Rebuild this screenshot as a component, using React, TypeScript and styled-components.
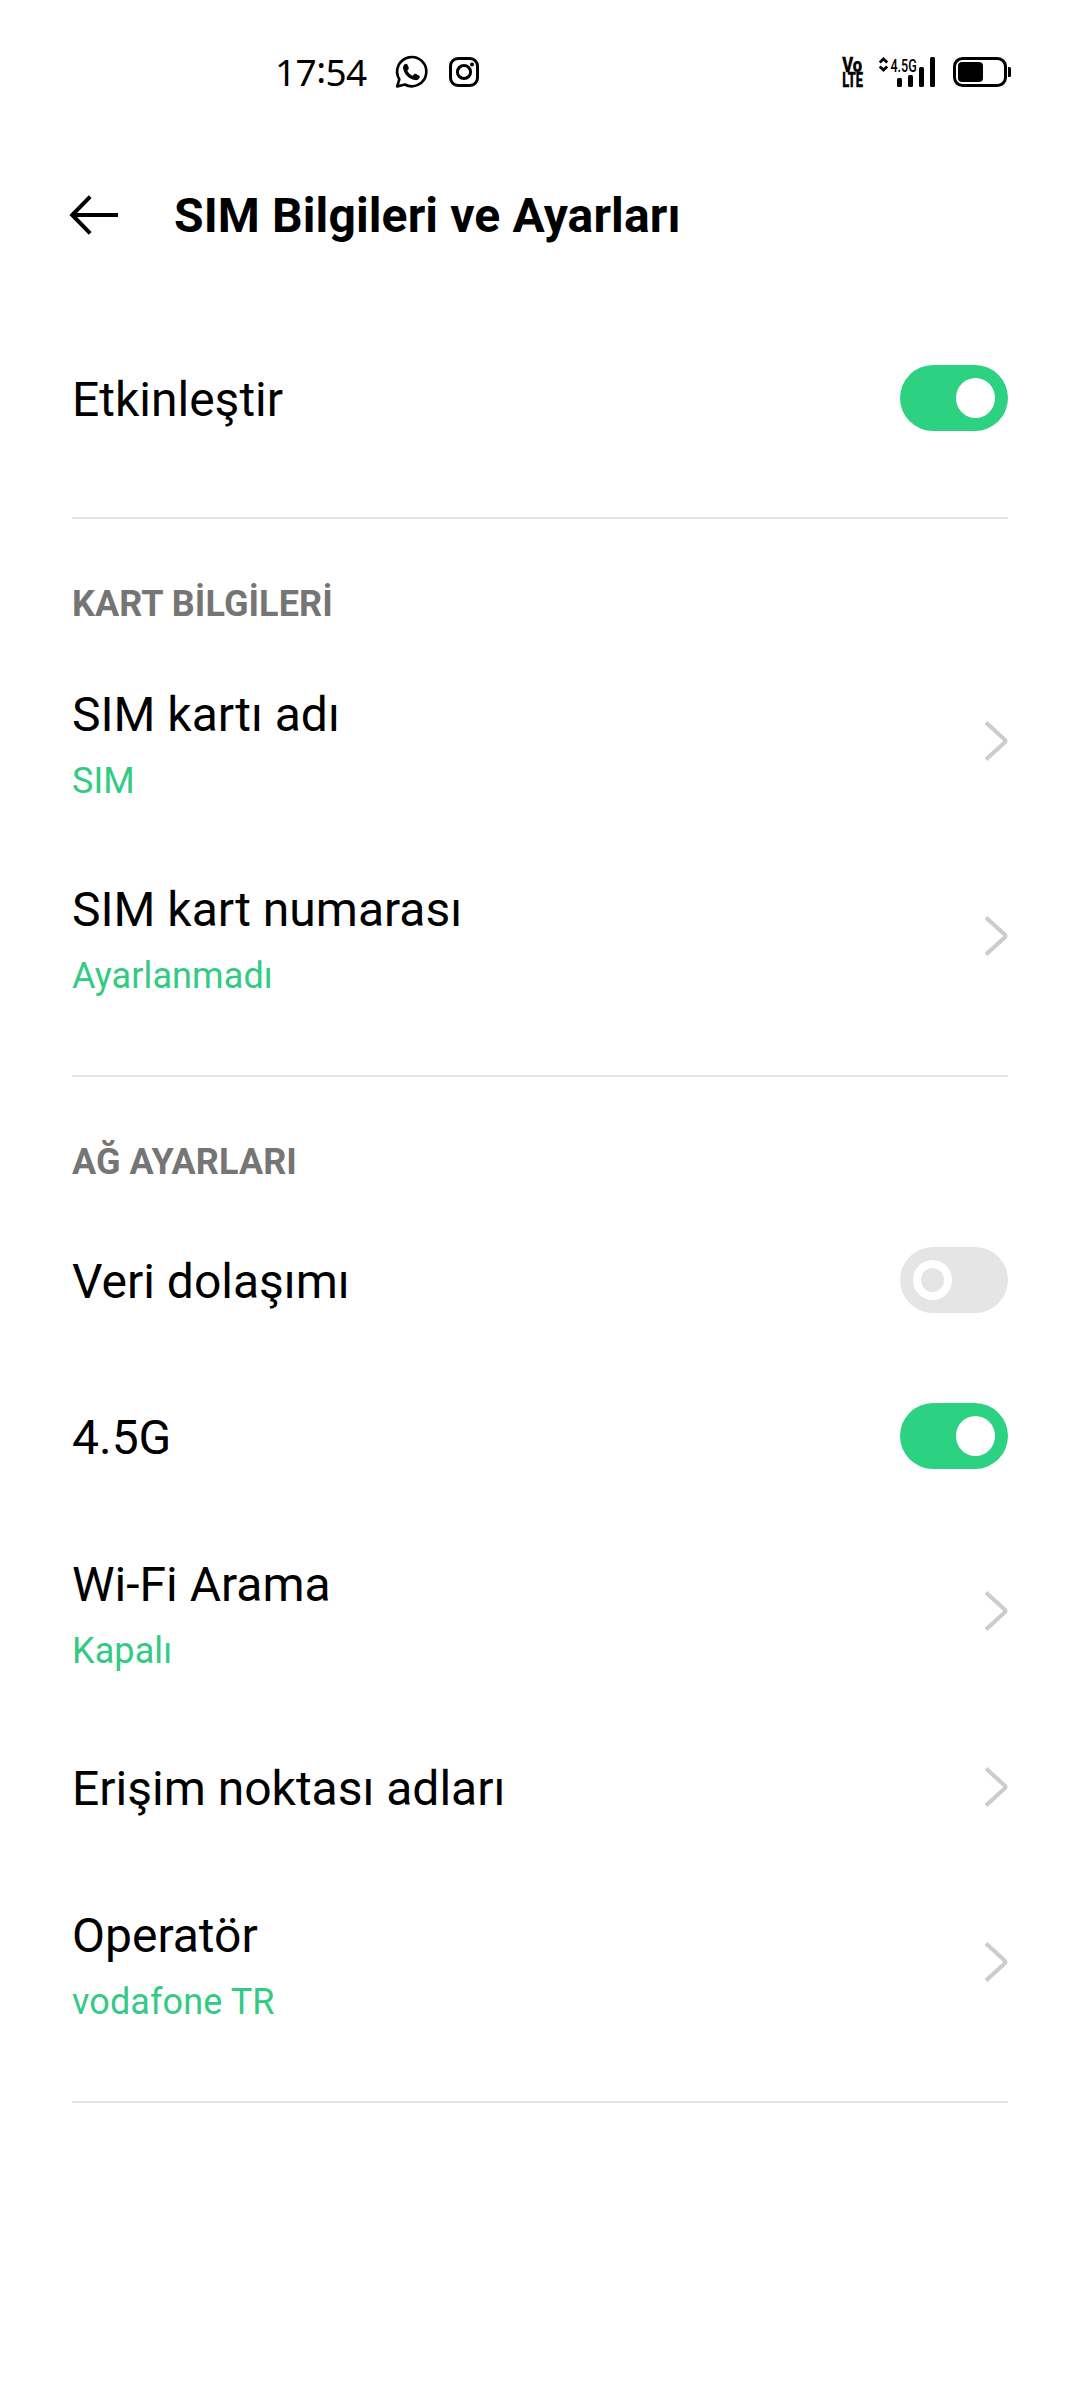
import React from "react";
import styled, { createGlobalStyle } from "styled-components";

const GlobalStyle = createGlobalStyle`
  body {
    margin: 0;
    background: #ffffff;
  }
  * {
    box-sizing: border-box;
  }
`;

const Screen = styled.div`
  width: 1080px;
  height: 2400px;
  display: flex;
  flex-direction: column;
  overflow: hidden;
  background: #ffffff;
  color: #000000;
  font-family: Roboto, "Liberation Sans", sans-serif;
`;

const StatusBar = styled.header`
  height: 144px;
  flex: none;
  display: flex;
  justify-content: space-between;
  align-items: center;
  padding: 0 68px 0 275px;
`;

const StatusGroup = styled.div`
  display: flex;
  align-items: center;
`;

const Clock = styled.time`
  width: 120px;
  font: 400 37px/50px "Noto Sans", "Open Sans", sans-serif;
  letter-spacing: -0.6px;
  white-space: nowrap;
`;

const ClockColon = styled.span`
  display: inline-block;
  transform: translateY(-3px);
`;

const Icon = styled.svg<{ $gap?: number }>`
  display: block;
  flex: none;
  overflow: visible;
  margin-left: ${({ $gap = 0 }) => $gap}px;
`;

const AppBar = styled.div`
  height: 176px;
  flex: none;
  display: flex;
  align-items: flex-start;
  gap: 52px;
  padding: 44px 72px 0 68px;
`;

const BackButton = styled.button`
  width: 54px;
  height: 54px;
  padding: 0;
  border: 0;
  background: none;
`;

const Title = styled.h1`
  margin: 0;
  font-size: 48px;
  line-height: 56px;
  font-weight: 700;
  letter-spacing: 0.12px;
  white-space: nowrap;
`;

const Section = styled.section`
  margin: 0 72px;
  padding-bottom: 41px;
  border-bottom: 2px solid #e5e5e5;
`;

const SectionTitle = styled.h2`
  height: 125px;
  margin: 0;
  padding-top: 64px;
  font-size: 36px;
  line-height: 42px;
  font-weight: 700;
  letter-spacing: 0.08px;
  color: #757575;
`;

const Row = styled.div<{ $tall: boolean }>`
  height: ${({ $tall }) => ($tall ? 195 : 156)}px;
  display: flex;
  align-items: center;
  justify-content: space-between;
`;

const RowText = styled.div<{ $tall: boolean }>`
  display: flex;
  flex-direction: column;
  gap: 17px;
  padding-top: ${({ $tall }) => ($tall ? 6 : 3)}px;
`;

const Label = styled.span`
  font-size: 48px;
  line-height: 56px;
`;

const Value = styled.span`
  font-size: 36px;
  line-height: 42px;
  letter-spacing: 0.1px;
  color: #33ca83;
`;

const Track = styled.button<{ $on: boolean }>`
  width: 108px;
  height: 66px;
  padding: 13px;
  border: 0;
  border-radius: 33px;
  display: flex;
  justify-content: ${({ $on }) => ($on ? "flex-end" : "flex-start")};
  background: ${({ $on }) => ($on ? "#2cd282" : "#e5e5e5")};
`;

const Knob = styled.span<{ $on: boolean }>`
  width: 39px;
  height: 40px;
  border-radius: 50%;
  border: 8px solid #ffffff;
  background: ${({ $on }) => ($on ? "#ffffff" : "transparent")};
`;

const Toggle = ({ on, label }: { on: boolean; label: string }) => (
  <Track $on={on} role="switch" aria-checked={on} aria-label={label}>
    <Knob $on={on} />
  </Track>
);

const Chevron = () => (
  <Icon width="24" height="43" viewBox="0 0 24 43" fill="none">
    <path d="M2 2.4 20.6 19.4Q22.2 21 20.6 22.6L2 39.6" stroke="#cccccc" strokeWidth="4" />
  </Icon>
);

type RowData = { label: string; value?: string; on?: boolean };

const SettingRow = ({ label, value, on }: RowData) => (
  <Row $tall={value !== undefined}>
    <RowText $tall={value !== undefined}>
      <Label>{label}</Label>
      {value && <Value>{value}</Value>}
    </RowText>
    {on === undefined ? <Chevron /> : <Toggle on={on} label={label} />}
  </Row>
);

const sections: { title?: string; rows: RowData[] }[] = [
  { rows: [{ label: "Etkinleştir", on: true }] },
  {
    title: "KART BİLGİLERİ",
    rows: [
      { label: "SIM kartı adı", value: "SIM" },
      { label: "SIM kart numarası", value: "Ayarlanmadı" },
    ],
  },
  {
    title: "AĞ AYARLARI",
    rows: [
      { label: "Veri dolaşımı", on: false },
      { label: "4.5G", on: true },
      { label: "Wi-Fi Arama", value: "Kapalı" },
      { label: "Erişim noktası adları" },
      { label: "Operatör", value: "vodafone TR" },
    ],
  },
];

const WhatsApp = () => (
  <Icon width="34" height="34" viewBox="0 0 34 34">
    <path
      d="M2.2 31.4 4.3 24.3A14.6 14.6 0 1 1 9.8 29.5Z"
      fill="none"
      stroke="#000"
      strokeWidth="2.6"
      strokeLinejoin="round"
    />
    <path
      d="M9.6 9.3c.9-.9 2.300-.8 2.800.3l1.300 3c.3.8.1 1.400-.5 2l-.9 1.100c1.200 2.300 3 4 5.400 5.100l1.500-1.500c.5-.5 1.100-.6 1.800-.3l2.900 1.400c1 .5 1.200 1.200.8 2.200-.8 2-2.700 2.900-4.900 2.500C13.900 24 9.100 19.200 8.100 13.500c-.3-1.700.3-3.100 1.500-4.200Z"
      fill="#000"
    />
  </Icon>
);

const Instagram = () => (
  <Icon $gap={19} width="32" height="32" viewBox="0 0 32 32" fill="none" stroke="#000">
    <rect x="2.500" y="2.500" width="27" height="27" rx="7.500" strokeWidth="3" />
    <circle cx="16" cy="16" r="6.600" strokeWidth="3" />
    <circle cx="24" cy="8.400" r="2" fill="#000" stroke="none" />
  </Icon>
);

const VoLte = () => (
  <Icon
    width="24"
    height="32"
    viewBox="0 0 24 32"
    fontFamily="Roboto, sans-serif"
    fontWeight="800"
    stroke="#000"
    strokeWidth="0.4"
  >
    <text transform="translate(1.300 15.500) scale(.86 1)" fontSize="19.300">Vo</text>
    <text transform="translate(1.200 30.900) scale(.66 1)" fontSize="19.500">LTE</text>
  </Icon>
);

const Signal = () => (
  <Icon $gap={13} width="58" height="32" viewBox="0 0 58 32">
    <path
      d="M1.800 6.600 5.500 3l3.700 3.600M1.800 10.400 5.500 14l3.700-3.600"
      fill="none"
      stroke="#000"
      strokeWidth="2.800"
    />
    <text
      transform="translate(12.500 16.200) scale(.66 1)"
      fontFamily="Roboto, sans-serif"
      fontWeight="500"
      fontSize="19"
    >
      4.5G
    </text>
    <rect x="19" y="22" width="5" height="9" rx="1.500" />
    <rect x="30" y="19" width="5" height="12" rx="1.500" />
    <rect x="41" y="11" width="5" height="20" rx="1.500" />
    <rect x="52" y="1" width="5" height="30" rx="1.500" />
  </Icon>
);

const Battery = () => (
  <Icon $gap={16} width="60" height="32" viewBox="0 0 60 32">
    <rect x="2.500" y="2.500" width="51" height="27" rx="8" fill="none" stroke="#000" strokeWidth="3" />
    <rect x="6" y="6" width="25" height="20" rx="4" />
    <path d="M56 11h1.500Q59 11 59 12.500v7Q59 21 57.500 21H56Z" />
  </Icon>
);

export default function App() {
  return (
    <Screen>
      <GlobalStyle />
      <StatusBar>
        <StatusGroup>
          <Clock>
            17<ClockColon>:</ClockColon>54
          </Clock>
          <WhatsApp />
          <Instagram />
        </StatusGroup>
        <StatusGroup>
          <VoLte />
          <Signal />
          <Battery />
        </StatusGroup>
      </StatusBar>
      <AppBar>
        <BackButton aria-label="Geri">
          <Icon width="54" height="54" viewBox="0 0 54 54" fill="none">
            <path d="M22.200 8.600 4.200 27l18 18.400M4.200 27H50" stroke="#000" strokeWidth="4" />
          </Icon>
        </BackButton>
        <Title>SIM Bilgileri ve Ayarları</Title>
      </AppBar>
      <main>
        {sections.map(({ title, rows }, i) => (
          <Section key={i}>
            {title && <SectionTitle>{title}</SectionTitle>}
            {rows.map((row) => (
              <SettingRow key={row.label} {...row} />
            ))}
          </Section>
        ))}
      </main>
    </Screen>
  );
}
